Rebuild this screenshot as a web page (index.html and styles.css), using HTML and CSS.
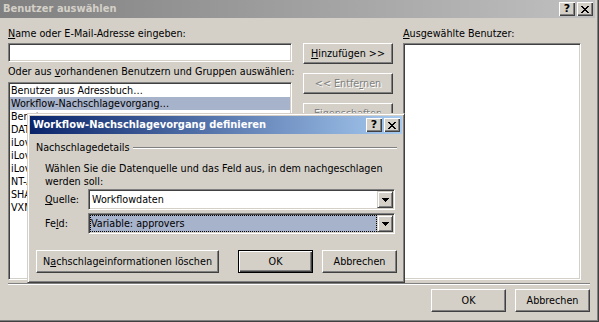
FILE: index.html
```html
<!DOCTYPE html>
<html lang="de">
<head>
<meta charset="utf-8">
<title>Benutzer auswählen</title>
<link rel="stylesheet" href="styles.css">
</head>
<body>
<div class="win">
  <div class="titlebar inactive">
    <span class="title">Benutzer auswählen</span>
    <div class="tbtns">
      <span class="tbtn q">?</span>
      <span class="tbtn"><svg width="8" height="7" viewBox="0 0 8 7"><path d="M0 0h2v1h-2zM6 0h2v1h-2zM1 1h2v1h-2zM5 1h2v1h-2zM2 2h4v1h-4zM3 3h2v1h-2zM2 4h4v1h-4zM1 5h2v1h-2zM5 5h2v1h-2zM0 6h2v1h-2zM6 6h2v1h-2z"/></svg></span>
    </div>
  </div>
  <div class="main">
    <div class="cols">
      <div class="leftcol">
        <div class="lbl"><u>N</u>ame oder E-Mail-Adresse eingeben:</div>
        <div class="edit"></div>
        <div class="lbl lbl2">Oder aus <u>v</u>orhandenen Benutzern und Gruppen auswählen:</div>
        <div class="list listl">
          <div class="item">Benutzer aus Adressbuch…</div>
          <div class="item sel">Workflow-Nachschlagevorgang…</div>
          <div class="item">Benutzer</div>
          <div class="item">DATAKEEPER</div>
          <div class="item">iLove01</div>
          <div class="item">iLove02</div>
          <div class="item">iLove03</div>
          <div class="item">NT-AUTORITÄT\Authentifizierte Benutzer</div>
          <div class="item">SHAREPOINT\system</div>
          <div class="item">VXM\admin</div>
        </div>
      </div>
      <div class="midcol">
        <div class="btn"><span><u>H</u>inzufügen &gt;&gt;</span></div>
        <div class="btn dis"><span>&lt;&lt; Entfe<u>r</u>nen</span></div>
        <div class="btn dis"><span>Eigenschaften</span></div>
      </div>
      <div class="rightcol">
        <div class="lbl"><u>A</u>usgewählte Benutzer:</div>
        <div class="list listr"></div>
      </div>
    </div>
    <div class="sep"></div>
    <div class="footer">
      <div class="btn fbtn">OK</div>
      <div class="btn fbtn">Abbrechen</div>
    </div>
  </div>

  <div class="dlg">
    <div class="titlebar active">
      <span class="title">Workflow-Nachschlagevorgang definieren</span>
      <div class="tbtns">
        <span class="tbtn q">?</span>
        <span class="tbtn"><svg width="8" height="7" viewBox="0 0 8 7"><path d="M0 0h2v1h-2zM6 0h2v1h-2zM1 1h2v1h-2zM5 1h2v1h-2zM2 2h4v1h-4zM3 3h2v1h-2zM2 4h4v1h-4zM1 5h2v1h-2zM5 5h2v1h-2zM0 6h2v1h-2zM6 6h2v1h-2z"/></svg></span>
      </div>
    </div>
    <div class="dcontent">
      <div class="group"><span>Nachschlagedetails</span><div class="gline"></div></div>
      <div class="indent">
        <div class="para">Wählen Sie die Datenquelle und das Feld aus, in dem nachgeschlagen werden soll:</div>
        <div class="frow">
          <div class="flbl"><u>Q</u>uelle:</div>
          <div class="combo"><div class="val">Workflowdaten</div><div class="dd"><svg width="7" height="4" viewBox="0 0 7 4"><path d="M0 0h7v1h-1v1h-1v1h-1v1h-1v-1h-1v-1h-1v-1h-1z"/></svg></div></div>
        </div>
        <div class="frow frow2">
          <div class="flbl">Fe<u>l</u>d:</div>
          <div class="combo"><div class="val focus">Variable: approvers</div><div class="dd"><svg width="7" height="4" viewBox="0 0 7 4"><path d="M0 0h7v1h-1v1h-1v1h-1v1h-1v-1h-1v-1h-1v-1h-1z"/></svg></div></div>
        </div>
      </div>
      <div class="dbtns">
        <div class="btn wide">N<u>a</u>chschlageinformationen löschen</div>
        <div class="btn def fbtn">OK</div>
        <div class="btn fbtn">Abbrechen</div>
      </div>
    </div>
  </div>
</div>
</body>
</html>
```
FILE: styles.css
```css
* { box-sizing: border-box; }
html, body { margin: 0; padding: 0; }
body {
  width: 599px; height: 322px; overflow: hidden;
  background: #d4d0c8;
  font-family: "DejaVu Sans Condensed", "DejaVu Sans", sans-serif;
  font-size: 10.7px; color: #000;
}
u { text-decoration: underline; text-underline-offset: 1px; }
.win {
  position: relative; width: 599px; height: 322px; background: #d4d0c8;
  box-shadow: inset -1px -1px #404040, inset -2px -2px #808080;
}
.titlebar {
  height: 18px; display: flex; align-items: center; justify-content: space-between;
  padding-left: 3px; padding-right: 2px;
}
.win > .titlebar { margin-right: 4px; }
.titlebar.inactive { background: linear-gradient(to right, #808080, #c0c0c0); }
.titlebar.active { background: linear-gradient(to right, #0a246a, #a6caf0); }
.title { font-weight: bold; font-size: 11px; line-height: 18px; white-space: nowrap; }
.inactive .title { color: #d4d0c8; }
.active .title { color: #fff; }
.tbtns { display: flex; gap: 2px; }
.tbtn {
  width: 16px; height: 14px; background: #d4d0c8;
  box-shadow: inset 1px 1px #fff, inset -1px -1px #404040, inset -2px -2px #808080;
  display: flex; align-items: center; justify-content: center;
}
.tbtn.q { font-weight: bold; font-size: 11px; line-height: 14px; font-family: "DejaVu Sans", sans-serif; }

.main { padding: 9px 9px 0 8px; }
.cols { display: grid; grid-template-columns: 284px 91px 178px; column-gap: 10px; }
.lbl { height: 13px; line-height: 13px; white-space: nowrap; }
.lbl2 { margin-top: 3px; }
.edit, .list {
  background: #fff; border: 1px solid; border-color: #808080 #fff #fff #808080;
  box-shadow: inset 1px 1px #404040, inset -1px -1px #d4d0c8;
}
.edit { height: 19px; margin-top: 3px; }
.list { padding: 1px; overflow: hidden; }
.listl { height: 198px; margin-top: 4px; }
.listr { height: 237px; margin-top: 3px; }
.item { height: 13px; line-height: 13px; padding-left: 1px; white-space: nowrap; }
.item.sel { background: #a7b2cb; }

.midcol { display: flex; flex-direction: column; gap: 9px; padding-top: 16px; padding-left: 1px; }
.btn {
  height: 21px; width: 90px; background: #d4d0c8;
  border: 1px solid; border-color: #fff #404040 #404040 #fff;
  box-shadow: inset -1px -1px #808080;
  display: flex; align-items: center; justify-content: center;
  white-space: nowrap; line-height: 13px;
}
.btn.dis { color: #808080; text-shadow: 1px 1px #fff; }
.btn.fbtn { width: 75px; height: 23px; }
.btn.wide { width: 183px; height: 23px; }
.btn.def {
  border: 1px solid #000;
  box-shadow: inset 1px 1px #fff, inset -1px -1px #404040, inset -2px -2px #808080;
}

.sep { margin-top: 3px; height: 2px; border-top: 1px solid #808080; border-bottom: 1px solid #fff; }
.footer { margin-top: 4px; display: flex; justify-content: flex-end; gap: 9px; }

.dlg {
  position: absolute; left: 27px; top: 113px; width: 378px; height: 170px;
  background: #d4d0c8; border: 1px solid; border-color: #d4d0c8 #404040 #404040 #d4d0c8;
  box-shadow: inset 1px 1px #fff, inset -1px -1px #808080;
  padding: 2px;
}
.dcontent { padding: 7px 5px 0 6px; }
.group { display: flex; align-items: center; height: 13px; line-height: 13px; }
.gline { flex: 1; margin-left: 4px; height: 2px; border-top: 1px solid #808080; border-bottom: 1px solid #fff; }
.indent { padding-left: 9px; }
.para { margin-top: 8px; line-height: 13px; width: 352px; }
.frow { display: flex; align-items: center; margin-top: 1px; }
.frow2 { margin-top: 3px; }
.flbl { width: 43px; }
.combo {
  height: 21px; width: 307px; background: #fff;
  border: 1px solid; border-color: #808080 #fff #fff #808080;
  box-shadow: inset 1px 1px #404040, inset -1px -1px #d4d0c8;
  padding: 1px; display: flex;
}
.combo .val { flex: 1; line-height: 17px; padding-left: 2px; white-space: nowrap; }
.combo .val.focus { background: #a7b2cb; outline: 1px dotted #000; outline-offset: -1px; padding-left: 1px; }
.combo .dd {
  width: 16px; height: 17px; background: #d4d0c8;
  border: 1px solid; border-color: #d4d0c8 #404040 #404040 #d4d0c8;
  box-shadow: inset 1px 1px #fff, inset -1px -1px #808080;
  display: flex; align-items: center; justify-content: center;
}
.dbtns { display: flex; margin-top: 16px; gap: 9px; }
.dbtns .wide { margin-right: 10px; }
```
